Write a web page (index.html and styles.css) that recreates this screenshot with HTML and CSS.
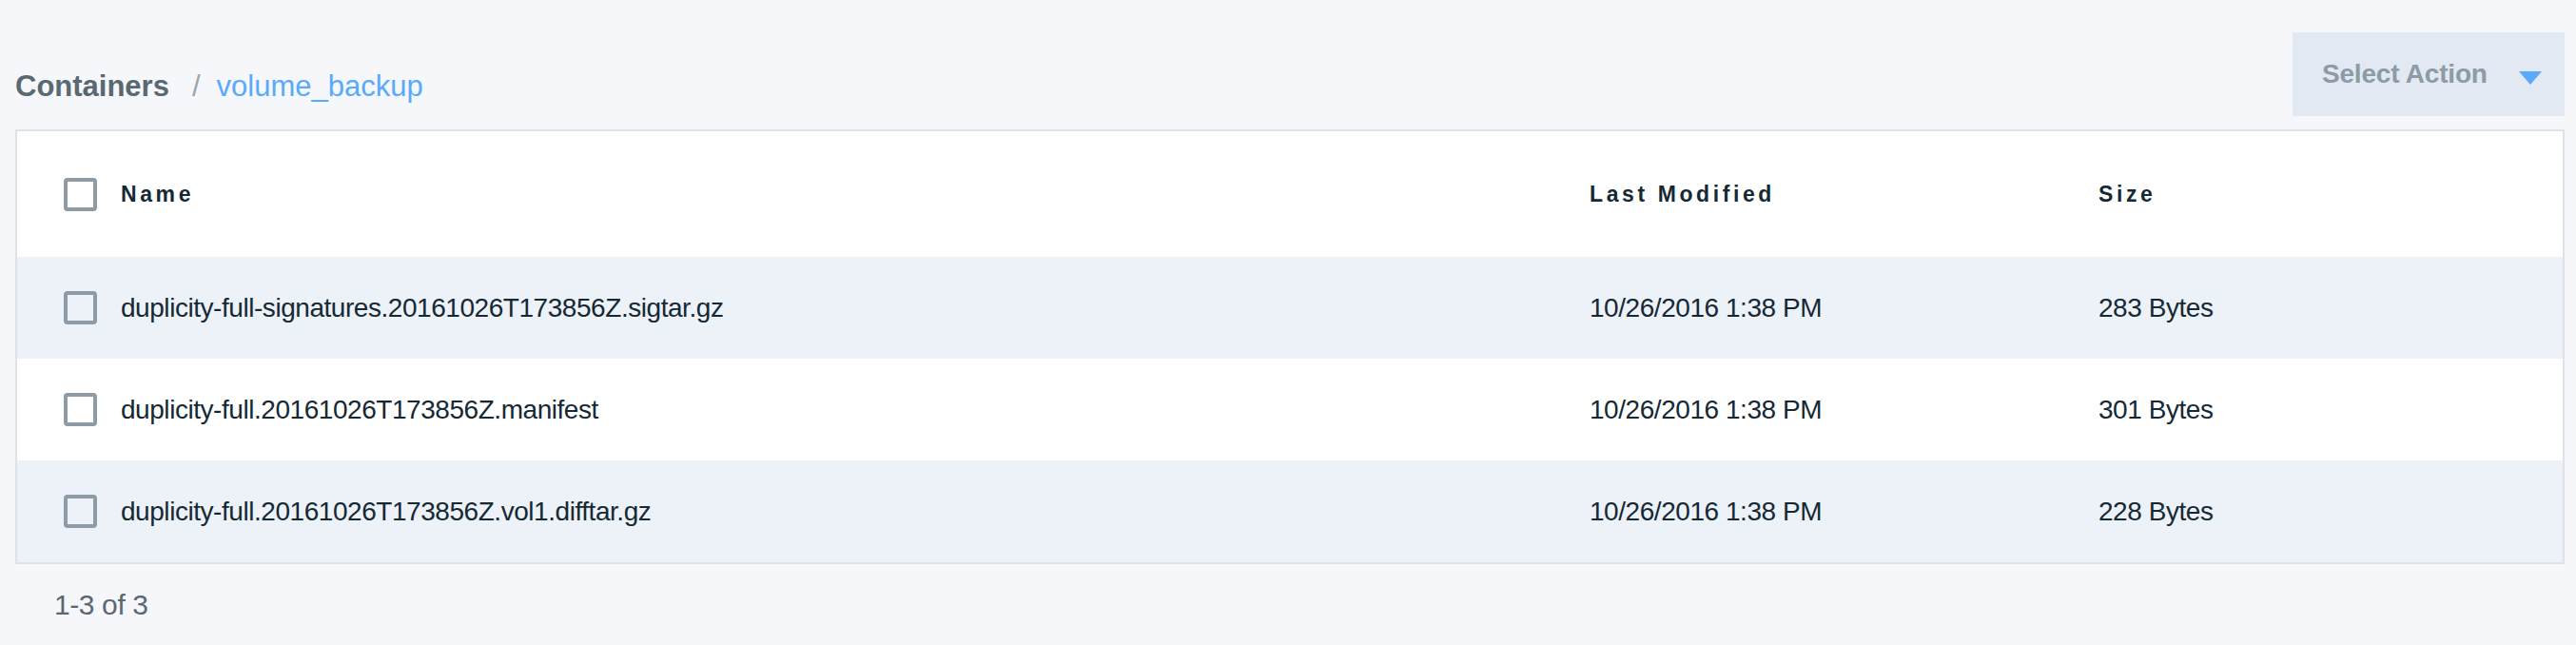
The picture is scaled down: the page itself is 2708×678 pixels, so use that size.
FILE: index.html
```html
<!DOCTYPE html>
<html lang="en">
<head>
<meta charset="utf-8">
<title>volume_backup</title>
<link rel="stylesheet" href="styles.css">
</head>
<body>
<div class="page">
  <div class="topbar">
    <div class="breadcrumb">
      <span class="crumb-root">Containers</span>
      <span class="crumb-sep">/</span>
      <span class="crumb-current">volume_backup</span>
    </div>
    <div class="action-btn">
      <span class="action-label">Select Action</span>
      <svg class="action-caret" width="24" height="14" viewBox="0 0 24 14"><path d="M0 0 H24 L12 14 Z" fill="#5aaafa"/></svg>
    </div>
  </div>

  <div class="table">
    <div class="row head">
      <div class="cell check"><span class="box"></span></div>
      <div class="cell">Name</div>
      <div class="cell">Last Modified</div>
      <div class="cell">Size</div>
    </div>
    <div class="row shaded">
      <div class="cell check"><span class="box"></span></div>
      <div class="cell">duplicity-full-signatures.20161026T173856Z.sigtar.gz</div>
      <div class="cell">10/26/2016 1:38 PM</div>
      <div class="cell">283 Bytes</div>
    </div>
    <div class="row">
      <div class="cell check"><span class="box"></span></div>
      <div class="cell">duplicity-full.20161026T173856Z.manifest</div>
      <div class="cell">10/26/2016 1:38 PM</div>
      <div class="cell">301 Bytes</div>
    </div>
    <div class="row shaded">
      <div class="cell check"><span class="box"></span></div>
      <div class="cell">duplicity-full.20161026T173856Z.vol1.difftar.gz</div>
      <div class="cell">10/26/2016 1:38 PM</div>
      <div class="cell">228 Bytes</div>
    </div>
  </div>

  <div class="footer">1-3 of 3</div>
</div>
</body>
</html>
```

FILE: styles.css
```css
html, body {
  margin: 0;
  padding: 0;
  background: #f5f7fa;
}

body {
  font-family: "Liberation Sans", Arial, sans-serif;
  color: #152935;
}

.page {
  padding: 34px 12px 0 16px;
}

.topbar {
  display: flex;
  justify-content: space-between;
  align-items: flex-end;
  height: 88px;
}

.breadcrumb {
  display: flex;
  align-items: baseline;
  font-size: 31px;
  line-height: 36px;
  margin-bottom: 13px;
}

.crumb-root {
  font-weight: bold;
  color: #5a6872;
}

.crumb-sep {
  color: #9aa5ad;
  margin: 0 17px 0 24px;
}

.crumb-current {
  color: #5aaafa;
}

.action-btn {
  align-self: stretch;
  width: 286px;
  box-sizing: border-box;
  background: #e2e9f3;
  display: flex;
  align-items: center;
  padding: 0 24px 0 31px;
}

.action-label {
  font-size: 28px;
  font-weight: bold;
  color: #8c9ba5;
  letter-spacing: -0.2px;
}

.action-caret {
  margin-left: auto;
  margin-top: 8px;
}

.table {
  margin-top: 14px;
  background: #ffffff;
  border: 2px solid #dfe3e6;
}

.row {
  display: grid;
  grid-template-columns: 109px 1544px 535px 1fr;
  align-items: center;
  height: 107px;
  font-size: 28px;
  letter-spacing: -0.45px;
  color: #152935;
}

.row.head {
  height: 132px;
  font-size: 23px;
  font-weight: bold;
  letter-spacing: 3.6px;
}

.row.shaded {
  background: #edf1f8;
}

.cell {
  white-space: nowrap;
}

.cell.check {
  display: flex;
  align-items: center;
  padding-left: 49px;
}

.box {
  display: block;
  width: 35px;
  height: 35px;
  box-sizing: border-box;
  border: 4px solid #8c9ba5;
  border-radius: 4px;
}

.footer {
  margin-top: 23px;
  padding-left: 41px;
  font-size: 30px;
  line-height: 40px;
  color: #5a6872;
  letter-spacing: -0.4px;
}
```
